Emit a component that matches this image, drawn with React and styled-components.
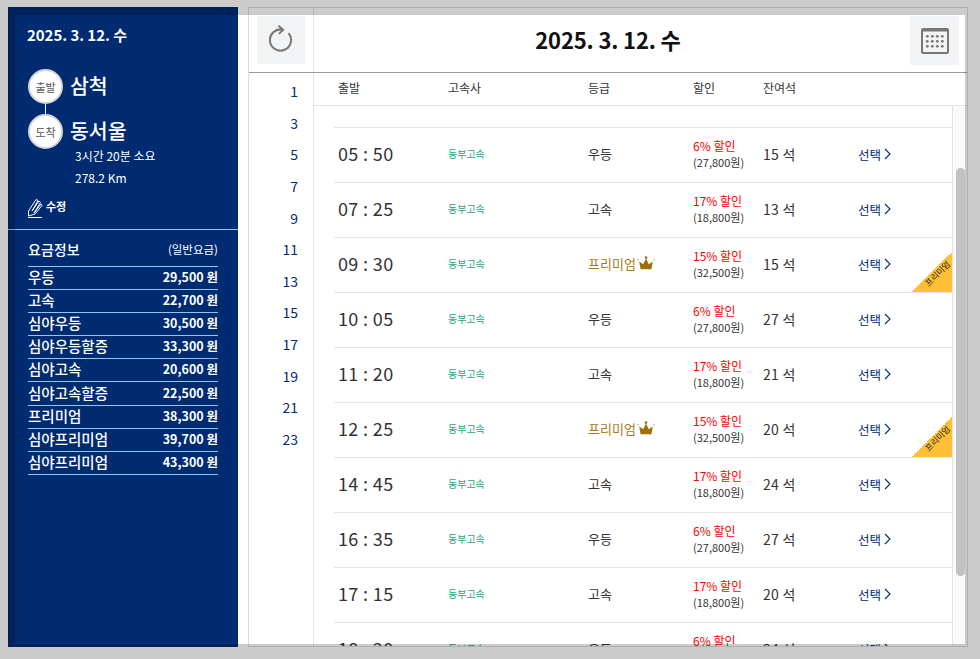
import React from 'react';
import styled, { createGlobalStyle } from 'styled-components';

const GlobalStyle = createGlobalStyle`
  html, body { margin: 0; padding: 0; height: 659px; overflow: hidden; background: #fff; }
  body { font-family: "Noto Sans CJK KR", "Noto Sans", sans-serif; color: #222; }
  * { box-sizing: border-box; }
`;

const navy = '#002b71';

const Page = styled.div`
  display: flex;
  gap: 10px;
  height: 659px;
  padding: 7px 0 12px 8px;
`;

const Dim = styled.div`
  position: fixed;
  left: 15px;
  top: 15px;
  width: 950px;
  height: 629px;
  box-shadow: 0 0 0 120px rgba(0, 0, 0, 0.2);
  pointer-events: none;
  z-index: 5;
`;

const Side = styled.aside`
  width: 230px;
  background: ${navy};
  color: #fff;
  padding-top: 17px;
  display: flex;
  flex-direction: column;
`;

const SideTop = styled.div`
  padding: 0 20px 0 19px;
  height: 205px;
`;

const DateText = styled.div`
  font-size: 15px;
  line-height: 22px;
  font-weight: 700;
  letter-spacing: -0.05px;
`;

const Stops = styled.div`
  margin: 23px 0 0 1px;
  display: flex;
  flex-direction: column;
`;

const Stop = styled.div`
  display: flex;
  align-items: center;
  gap: 7px;
  height: 35px;
`;

const Stem = styled.div`
  width: 1px;
  height: 10px;
  margin-left: 17px;
  background: #fff;
`;

const Circle = styled.span`
  width: 35px;
  height: 35px;
  flex: none;
  border-radius: 50%;
  background: #fff;
  border: 2px solid #d5d5d5;
  color: #555;
  font-size: 11px;
  display: flex;
  align-items: center;
  justify-content: center;
`;

const Place = styled.span`
  font-size: 20.5px;
  font-weight: 500;
  line-height: 28px;
  padding-bottom: 4px;
`;

const Meta = styled.div`
  margin: ${p => p.$top}px 0 0 48px;
  font-size: 12px;
  line-height: 18px;
`;

const Edit = styled.div`
  display: flex;
  align-items: flex-start;
  gap: 3px;
  margin: 11px 0 0 1px;
  font-size: 11px;
  font-weight: 700;
  line-height: 16px;
`;

const SideLine = styled.div`
  height: 1px;
  background: #8fc8ee;
`;

const Fare = styled.div`
  padding: 9px 20px 0;
`;

const FareHead = styled.div`
  display: flex;
  justify-content: space-between;
  align-items: center;
  height: 28px;
  border-bottom: 1px solid #8fc8ee;
  padding-bottom: 8px;
  font-size: 14px;
  font-weight: 500;
  small { font-size: 11.5px; font-weight: 400; }
`;

const FareRow = styled.div`
  display: flex;
  justify-content: space-between;
  align-items: center;
  height: 23.1px;
  padding-bottom: 3px;
  border-bottom: 1px solid #8fc8ee;
  font-size: 14.5px;
  font-weight: 500;
  b { font-size: 12.5px; font-weight: 700; }
`;

const Main = styled.main`
  width: 720px;
  border: 1px solid #dcdcdc;
  display: flex;
  flex-direction: column;
  overflow: hidden;
`;

const Top = styled.header`
  display: flex;
  align-items: stretch;
  height: 65px;
  flex: none;
  border-bottom: 1px solid #999;
`;

const TopLeft = styled.div`
  width: 65px;
  flex: none;
  padding: 8px 0 0 8px;
  border-right: 1px solid #e2e2e2;
`;

const IconBtn = styled.button`
  width: ${p => p.$w}px;
  height: ${p => p.$w}px;
  padding: 0;
  border: 0;
  background: #f2f3f5;
  display: flex;
  align-items: center;
  justify-content: center;
`;

const Title = styled.h1`
  flex: 1;
  margin: 0;
  padding-right: 8px;
  text-align: center;
  font-size: 22px;
  letter-spacing: -0.15px;
  line-height: 62px;
  font-weight: 700;
  color: #111;
`;

const TopRight = styled.div`
  flex: none;
  padding: 8px 8px 0 0;
`;

const Body = styled.div`
  flex: 1;
  display: flex;
  min-height: 0;
`;

const Hours = styled.nav`
  width: 65px;
  flex: none;
  padding: 3px 15px 0 0;
  border-right: 1px solid #e2e2e2;
  text-align: right;
  color: ${navy};
  font-size: 14px;
`;

const Hour = styled.div`
  height: 31.64px;
  line-height: 31.64px;
`;

const Board = styled.div`
  flex: 1;
  min-width: 0;
  display: flex;
  flex-direction: column;
`;

const Cols = styled.div`
  display: grid;
  grid-template-columns: 110px 140px 105px 70px 95px 1fr;
  align-items: center;
`;

const Head = styled(Cols)`
  height: 33px;
  flex: none;
  padding: 0 0 4px 24px;
  border-bottom: 1px solid #e5e5e5;
  font-size: 12px;
  color: #333;
`;

const Scroll = styled.div`
  flex: 1;
  display: flex;
  min-height: 0;
`;

const List = styled.div`
  flex: 1;
  padding-left: 20px;
  min-width: 0;
`;

const Spacer = styled.div`
  height: 22px;
  border-bottom: 1px solid #e5e5e5;
`;

const Row = styled(Cols)`
  position: relative;
  height: 55px;
  padding-left: 4px;
  border-bottom: 1px solid #e5e5e5;
`;

const Time = styled.div`
  font-size: 18px;
  letter-spacing: 0.35px;
  color: #333;
  margin-bottom: 5px;
`;

const Company = styled.div`
  font-size: 10px;
  color: #1ea67f;
  margin-bottom: 4px;
`;

const Grade = styled.div`
  display: flex;
  align-items: center;
  gap: 1px;
  font-size: 13px;
  color: ${p => (p.$premium ? '#a87b12' : '#333')};
  margin-bottom: 4px;
`;

const Discount = styled.div`
  font-size: 12px;
  line-height: 16.5px;
  color: #f00;
  margin-bottom: 2px;
  small { display: block; font-size: 11px; color: #333; line-height: 16.5px; }
`;

const Seats = styled.div`
  font-size: 14px;
  letter-spacing: 0.3px;
  color: #333;
  margin-bottom: 3px;
`;

const Pick = styled.div`
  display: flex;
  align-items: center;
  gap: 3px;
  font-size: 12.5px;
  color: ${navy};
  margin-bottom: 2px;
`;

const Ribbon = styled.div`
  position: absolute;
  right: 0;
  bottom: 0;
  width: 40px;
  height: 40px;
  background: linear-gradient(135deg, transparent 50%, #ffc035 50%);
  overflow: hidden;
`;

const RibbonText = styled.span`
  position: absolute;
  left: 7px;
  top: 15px;
  width: 36px;
  text-align: center;
  font-size: 8.5px;
  line-height: 12px;
  color: #222;
  white-space: nowrap;
  transform: rotate(-45deg);
`;

const Track = styled.div`
  width: 15px;
  flex: none;
  background: #fafafa;
  border-left: 1px solid #e2e2e2;
  padding: 62px 0 0 3px;
`;

const Thumb = styled.div`
  width: 9px;
  height: 408px;
  border-radius: 5px;
  background: #c1c1c1;
`;

const hours = [1, 3, 5, 7, 9, 11, 13, 15, 17, 19, 21, 23];

const fares = [
  ['우등', '29,500'],
  ['고속', '22,700'],
  ['심야우등', '30,500'],
  ['심야우등할증', '33,300'],
  ['심야고속', '20,600'],
  ['심야고속할증', '22,500'],
  ['프리미엄', '38,300'],
  ['심야프리미엄', '39,700'],
  ['심야프리미엄', '43,300'],
];

const gradeInfo = {
  우등: ['6%', '27,800'],
  고속: ['17%', '18,800'],
  프리미엄: ['15%', '32,500'],
};

const trips = [
  ['05 : 50', '우등', 15],
  ['07 : 25', '고속', 13],
  ['09 : 30', '프리미엄', 15],
  ['10 : 05', '우등', 27],
  ['11 : 20', '고속', 21],
  ['12 : 25', '프리미엄', 20],
  ['14 : 45', '고속', 24],
  ['16 : 35', '우등', 27],
  ['17 : 15', '고속', 20],
  ['18 : 20', '우등', 24],
];

function RefreshIcon() {
  return (
    <svg width="26" height="28" viewBox="0 0 26 28" fill="none" stroke="#777" strokeWidth="2" style={{ margin: '-2px 0 0 -2px' }}>
      <path d="M15.5 4.6A10.6 10.6 0 1 0 21.6 8.2" />
      <path d="M11.5 0.8l4.6 3.9-4.2 4.2" />
    </svg>
  );
}

function CalendarIcon() {
  const dots = [];
  for (let y = 0; y < 3; y++) {
    for (let x = 0; x < 4; x++) {
      dots.push(<circle key={x + '-' + y} cx={6.3 + x * 5} cy={8.3 + y * 5} r="1.4" fill="#777" />);
    }
  }
  return (
    <svg width="28" height="26" viewBox="0 0 28 26" fill="none">
      <rect x="1" y="1" width="26" height="24" rx="1" stroke="#777" strokeWidth="2" />
      <rect x="1" y="1" width="26" height="2.5" fill="#777" />
      {dots}
    </svg>
  );
}

function PencilIcon() {
  return (
    <svg width="15" height="20" viewBox="0 0 15 20" fill="none" stroke="#fff" strokeWidth="1">
      <path d="M0.5 18V13L8 1.5L10 2.5L4 13L11 3L12.5 4.5L6 15L13 6L14 7.5L7 16L0.5 18" />
      <path d="M0 19.5h14" />
    </svg>
  );
}

function Crown() {
  return (
    <svg width="18" height="14" viewBox="0 0 18 14">
      <path d="M3.6 13.2L2.2 5.4l4 2.8L9 2.4l2.8 5.8 4-2.8-1.4 7.8z" fill="#a06e06" />
      <circle cx="9" cy="1.6" r="1.3" fill="#a06e06" />
      <circle cx="1" cy="3.8" r="0.8" fill="#c9a860" />
      <circle cx="17" cy="3.8" r="0.8" fill="#c9a860" />
    </svg>
  );
}

function Chevron() {
  return (
    <svg width="7" height="12" viewBox="0 0 7 12" fill="none" stroke={navy} strokeWidth="1.1">
      <path d="M1 1l5 5-5 5" />
    </svg>
  );
}

export default function App() {
  return (
    <>
      <GlobalStyle />
      <Page>
        <Side>
          <SideTop>
            <DateText>2025. 3. 12. 수</DateText>
            <Stops>
              <Stop>
                <Circle>출발</Circle>
                <Place>삼척</Place>
              </Stop>
              <Stem />
              <Stop>
                <Circle>도착</Circle>
                <Place>동서울</Place>
              </Stop>
            </Stops>
            <Meta $top={-2}>3시간 20분 소요</Meta>
            <Meta $top={4}>278.2 Km</Meta>
            <Edit>
              <PencilIcon />
              수정
            </Edit>
          </SideTop>
          <SideLine />
          <Fare>
            <FareHead>
              요금정보
              <small>(일반요금)</small>
            </FareHead>
            {fares.map(([name, price], i) => (
              <FareRow key={i}>
                {name}
                <b>{price} 원</b>
              </FareRow>
            ))}
          </Fare>
        </Side>
        <Main>
          <Top>
            <TopLeft>
              <IconBtn $w={48}>
                <RefreshIcon />
              </IconBtn>
            </TopLeft>
            <Title>2025. 3. 12. 수</Title>
            <TopRight>
              <IconBtn $w={49}>
                <CalendarIcon />
              </IconBtn>
            </TopRight>
          </Top>
          <Body>
            <Hours>
              {hours.map(h => (
                <Hour key={h}>{h}</Hour>
              ))}
            </Hours>
            <Board>
              <Head>
                <span>출발</span>
                <span>고속사</span>
                <span>등급</span>
                <span>할인</span>
                <span>잔여석</span>
              </Head>
              <Scroll>
                <List>
                  <Spacer />
                  {trips.map(([time, grade, seats]) => {
                    const premium = grade === '프리미엄';
                    return (
                      <Row key={time}>
                        <Time>{time}</Time>
                        <Company>동부고속</Company>
                        <Grade $premium={premium}>
                          {grade}
                          {premium && <Crown />}
                        </Grade>
                        <Discount>
                          {gradeInfo[grade][0]} 할인
                          <small>({gradeInfo[grade][1]}원)</small>
                        </Discount>
                        <Seats>{seats} 석</Seats>
                        <Pick>
                          선택 <Chevron />
                        </Pick>
                        {premium && (
                          <Ribbon>
                            <RibbonText>프리미엄</RibbonText>
                          </Ribbon>
                        )}
                      </Row>
                    );
                  })}
                </List>
                <Track>
                  <Thumb />
                </Track>
              </Scroll>
            </Board>
          </Body>
        </Main>
      </Page>
      <Dim />
    </>
  );
}
